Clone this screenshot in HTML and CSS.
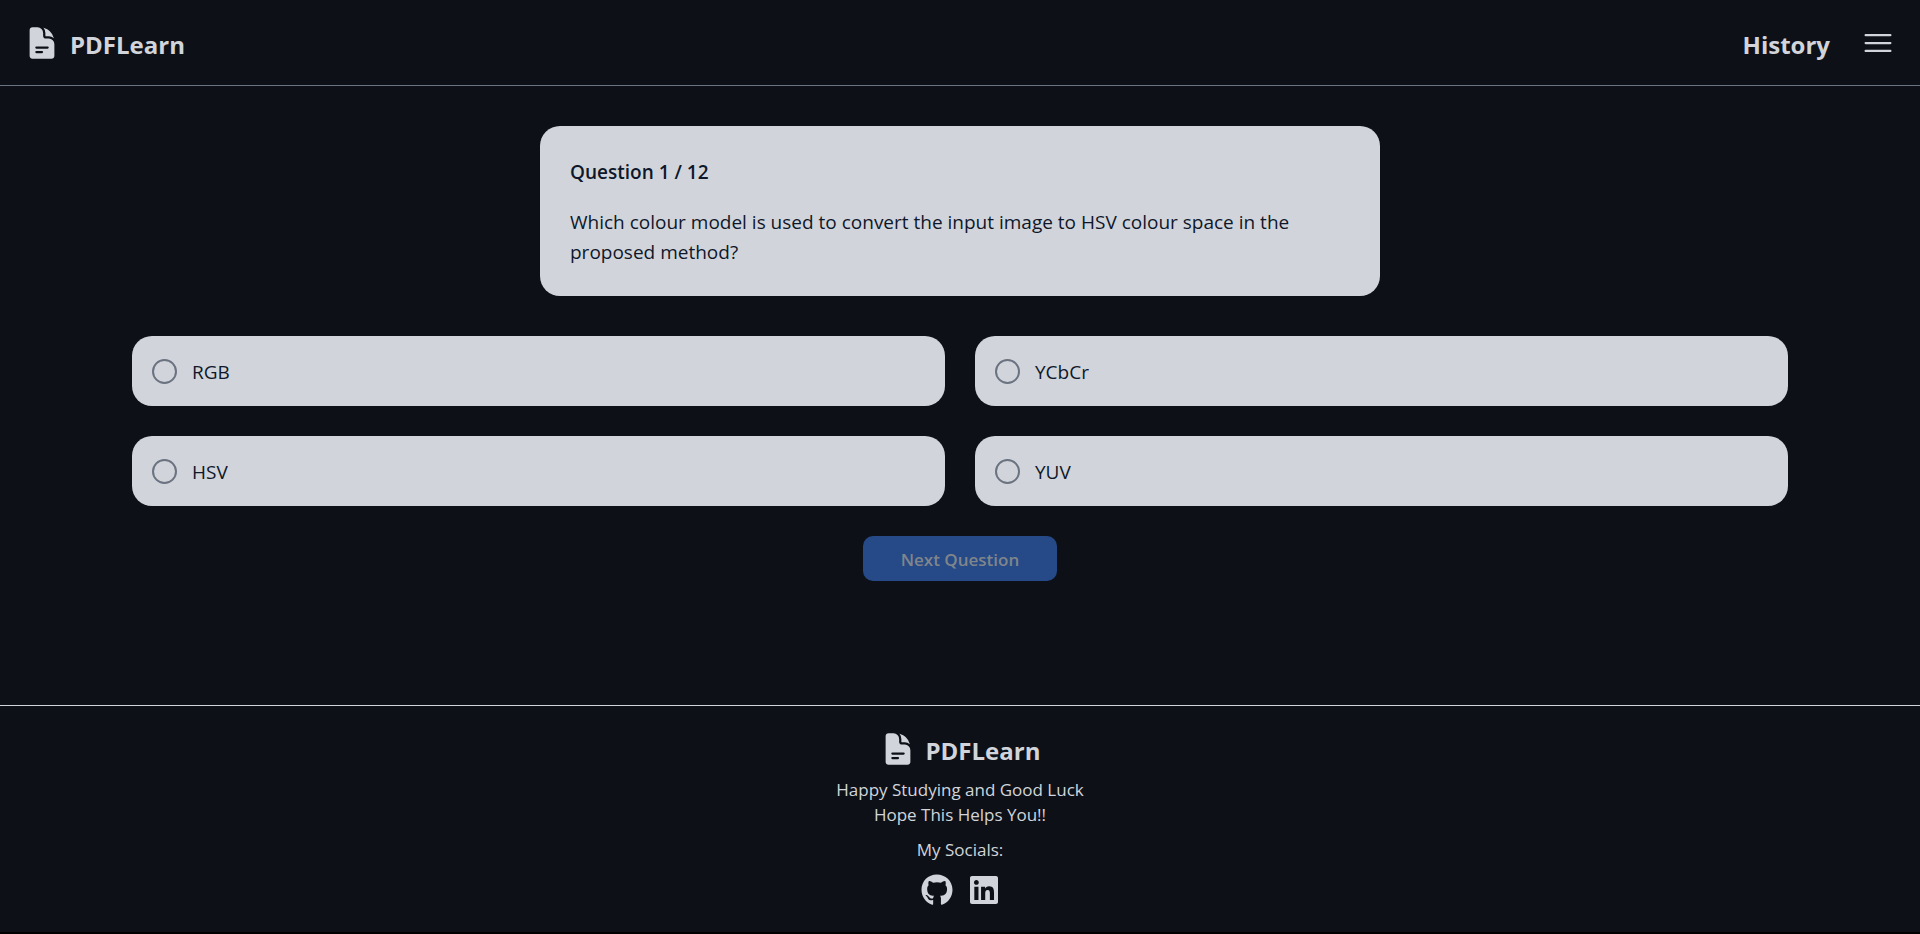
FILE: index.html
```html
<!DOCTYPE html>
<html lang="en">
<head>
<meta charset="utf-8">
<meta name="viewport" content="width=device-width, initial-scale=1">
<title>PDFLearn</title>
<link rel="stylesheet" href="styles.css">
</head>
<body>
<svg class="sprite" aria-hidden="true">
  <symbol id="icon-document" viewBox="0 0 24 24">
    <path fill-rule="evenodd" clip-rule="evenodd" d="M5.625 1.5c-1.036 0-1.875.84-1.875 1.875v17.25c0 1.035.84 1.875 1.875 1.875h12.75c1.035 0 1.875-.84 1.875-1.875V12.75A3.75 3.75 0 0 0 16.5 9h-1.875a1.875 1.875 0 0 1-1.875-1.875V5.25A3.75 3.75 0 0 0 9 1.5H5.625ZM7.5 15a.75.75 0 0 1 .75-.75h7.5a.75.75 0 0 1 0 1.5h-7.5A.75.75 0 0 1 7.5 15Zm.75 2.25a.75.75 0 0 0 0 1.5H12a.75.75 0 0 0 0-1.5H8.25Z"/>
    <path d="M12.971 1.816A5.23 5.23 0 0 1 14.25 5.25v1.875c0 .207.168.375.375.375H16.5a5.23 5.23 0 0 1 3.434 1.279 9.768 9.768 0 0 0-6.963-6.963Z"/>
  </symbol>
</svg>
<div class="page">
  <header class="site-header">
    <a class="brand" href="#"><svg class="icon"><use href="#icon-document"/></svg><span class="brand-name">PDFLearn</span></a>
    <nav class="site-nav">
      <a class="nav-link" href="#">History</a>
      <button class="menu-button" type="button" aria-label="Menu">
        <svg class="icon icon-line" viewBox="0 0 24 24"><path d="M3.75 6.75h16.5M3.75 12h16.5m-16.5 5.25h16.5"/></svg>
      </button>
    </nav>
  </header>

  <main>
    <form class="quiz">
      <section class="question">
        <h1 class="question-count">Question 1 / 12</h1>
        <p class="question-text" id="question">Which colour model is used to convert the input image to HSV colour space in the proposed method?</p>
      </section>
      <div class="options" role="radiogroup" aria-labelledby="question">
        <label class="option"><input type="radio" name="answer" value="rgb"><span>RGB</span></label>
        <label class="option"><input type="radio" name="answer" value="ycbcr"><span>YCbCr</span></label>
        <label class="option"><input type="radio" name="answer" value="hsv"><span>HSV</span></label>
        <label class="option"><input type="radio" name="answer" value="yuv"><span>YUV</span></label>
      </div>
      <button class="next-button" type="submit" disabled>Next Question</button>
    </form>
  </main>

  <footer class="site-footer">
    <a class="brand" href="#"><svg class="icon"><use href="#icon-document"/></svg><span class="brand-name">PDFLearn</span></a>
    <p class="tagline">Happy Studying and Good Luck<br>Hope This Helps You!!</p>
    <p>My Socials:</p>
    <div class="socials">
      <a href="#" aria-label="GitHub"><svg class="social-icon" viewBox="0 0 496 512"><path d="M165.9 397.4c0 2-2.3 3.6-5.2 3.6-3.3.3-5.6-1.3-5.6-3.6 0-2 2.3-3.6 5.2-3.6 3-.3 5.6 1.3 5.6 3.6zm-31.1-4.5c-.7 2 1.3 4.3 4.3 4.9 2.6 1 5.6 0 6.2-2s-1.3-4.3-4.3-5.2c-2.6-.7-5.5.3-6.2 2.3zm44.2-1.7c-2.9.7-4.9 2.6-4.6 4.9.3 2 2.9 3.3 5.9 2.6 2.9-.7 4.9-2.6 4.6-4.6-.3-1.9-3-3.2-5.9-2.9zM244.8 8C106.1 8 0 113.3 0 252c0 110.9 69.8 205.8 169.5 239.2 12.8 2.3 17.3-5.6 17.3-12.1 0-6.2-.3-40.4-.3-61.4 0 0-70 15-84.7-29.8 0 0-11.4-29.1-27.8-36.6 0 0-22.9-15.7 1.6-15.4 0 0 24.9 2 38.6 25.8 21.9 38.6 58.6 27.5 72.9 20.9 2.3-16 8.8-27.1 16-33.7-55.9-6.2-112.3-14.3-112.3-110.5 0-27.5 7.6-41.3 23.6-58.9-2.6-6.5-11.1-33.3 2.6-67.9 20.9-6.5 69 27 69 27 20-5.6 41.5-8.5 62.8-8.5s42.8 2.9 62.8 8.5c0 0 48.1-33.6 69-27 13.7 34.7 5.2 61.4 2.6 67.9 16 17.7 25.8 31.5 25.8 58.9 0 96.5-58.9 104.2-114.8 110.5 9.2 7.9 17 22.9 17 46.4 0 33.7-.3 75.4-.3 83.6 0 6.5 4.6 14.4 17.3 12.1C428.2 457.8 496 362.9 496 252 496 113.3 383.5 8 244.8 8z"/></svg></a>
      <a href="#" aria-label="LinkedIn"><svg class="social-icon" viewBox="0 0 448 512"><path d="M416 32H31.9C14.3 32 0 46.5 0 64.3v383.4C0 465.5 14.3 480 31.9 480H416c17.6 0 32-14.5 32-32.3V64.3c0-17.8-14.4-32.3-32-32.3zM135.4 416H69V202.2h66.5V416zm-33.2-243c-21.3 0-38.5-17.3-38.5-38.5S80.9 96 102.2 96c21.2 0 38.5 17.3 38.5 38.5 0 21.3-17.2 38.5-38.5 38.5zm282.1 243h-66.4V312c0-24.8-.5-56.7-34.5-56.7-34.6 0-39.9 27-39.9 54.9V416h-66.4V202.2h63.7v29.2h.9c8.9-16.8 30.6-34.5 62.9-34.5 67.2 0 79.7 44.3 79.7 101.9V416z"/></svg></a>
    </div>
  </footer>
</div>
</body>
</html>
```

FILE: styles.css
```css
* {
  box-sizing: border-box;
  margin: 0;
}

html {
  background: #000;
}

body {
  color: #d1d5db;
  font-family: "Segoe UI", "Open Sans", "Noto Sans", sans-serif;
  font-size: 17px;
  line-height: 25px;
}

a {
  color: inherit;
  text-decoration: none;
}

svg {
  display: block;
  fill: currentColor;
}

.sprite {
  position: absolute;
  width: 0;
  height: 0;
}

.page {
  display: flex;
  flex-direction: column;
  min-height: calc(100vh - 2px);
  background: #0d1117;
}

.site-header {
  display: flex;
  align-items: flex-start;
  justify-content: space-between;
  padding: 25px 24px 22px;
  border-bottom: 1px solid #6b7280;
}

.brand-name,
.nav-link {
  padding-top: 2px;
  font-size: 24px;
  font-weight: 700;
  line-height: 36px;
}

.brand {
  display: flex;
  align-items: flex-start;
  gap: 10px;
}

.icon {
  width: 36px;
  height: 36px;
}

.icon-line {
  fill: none;
  stroke: currentColor;
  stroke-width: 1.5;
  stroke-linecap: round;
}

.site-nav {
  display: flex;
  align-items: flex-start;
  gap: 30px;
}

.menu-button {
  padding: 0;
  border: 0;
  background: none;
  color: inherit;
}

main {
  flex: 1;
  padding: 40px 30px;
}

.quiz {
  display: flex;
  flex-direction: column;
  align-items: center;
  color: #0f172a;
  font-size: 19px;
  line-height: 30px;
}

.question {
  width: 100%;
  max-width: 840px;
  padding: 31px 30px 29px;
  border-radius: 20px;
  background: #d1d5db;
}

.question-count {
  margin-bottom: 20px;
  font-size: 19px;
  font-weight: 600;
}

.options {
  display: grid;
  grid-template-columns: 1fr 1fr;
  gap: 30px;
  width: 100%;
  max-width: 1656px;
  margin: 40px 0 30px;
}

.option {
  display: flex;
  align-items: center;
  gap: 15px;
  padding: 19px 20px;
  border-radius: 20px;
  background: #d1d5db;
}

.option span {
  padding-top: 2px;
}

.option input {
  appearance: none;
  width: 25px;
  height: 25px;
  margin: 0;
  border: 2px solid #6b7280;
  border-radius: 50%;
}

.option input:checked {
  background: #2563eb;
}

.next-button {
  padding: 11px 38px 9px;
  border: 0;
  border-radius: 10px;
  background: #254a87;
  color: #80858b;
  font: inherit;
  font-size: 17px;
  font-weight: 600;
  line-height: 25px;
}

.site-footer {
  display: flex;
  flex-direction: column;
  align-items: center;
  padding: 25px 25px 26px;
  border-top: 1px solid #d1d5db;
  text-align: center;
}

.tagline {
  margin: 8px 0 10px;
}

.socials {
  display: flex;
  gap: 15px;
  margin-top: 12px;
}

.social-icon {
  width: 32px;
  height: 32px;
}
```
